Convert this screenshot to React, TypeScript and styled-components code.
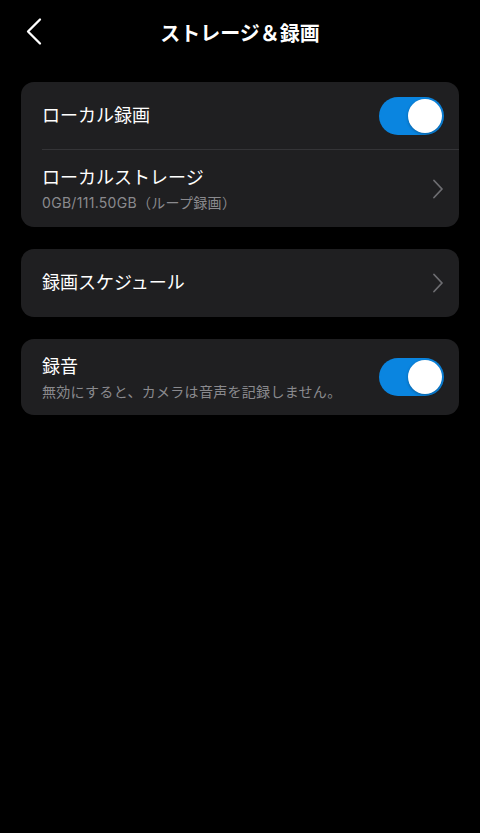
import { FC, useState } from 'react'
import styled, { createGlobalStyle } from 'styled-components'

const GlobalStyle = createGlobalStyle`
  html, body {
    margin: 0;
    padding: 0;
    background: #000;
  }
  body {
    font-family: "Inter", "Noto Sans CJK JP", "Noto Sans", sans-serif;
    color: #fff;
  }
`

const Page = styled.div`
  width: 480px;
  min-height: 833px;
  background: #000;
  display: flex;
  flex-direction: column;
`

const Header = styled.header`
  position: relative;
  height: 64px;
  display: flex;
  align-items: center;
  justify-content: center;
`

const BackButton = styled.button`
  position: absolute;
  left: 25px;
  top: 17px;
  width: 18px;
  height: 29px;
  padding: 0;
  border: none;
  background: none;
  display: flex;
  align-items: center;
  justify-content: center;
`

const Title = styled.h1`
  margin: 0;
  font-size: 20px;
  font-weight: 700;
  color: #fff;
`

const Content = styled.main`
  display: flex;
  flex-direction: column;
  gap: 22px;
  padding: 18px 21px 0;
`

const Card = styled.section`
  background: #1f1f21;
  border-radius: 13px;
  overflow: hidden;
`

const Row = styled.div<{ $height: number; $divider?: boolean }>`
  height: ${(p) => p.$height}px;
  display: flex;
  align-items: center;
  justify-content: space-between;
  padding: 0 15px 0 21px;
  position: relative;
  box-sizing: border-box;
  ${(p) =>
    p.$divider &&
    `&::after {
      content: '';
      position: absolute;
      left: 21px;
      right: 0;
      bottom: 0;
      height: 1px;
      background: #343437;
    }`}
`

const Texts = styled.div`
  display: flex;
  flex-direction: column;
  gap: 3px;
  padding-top: 2px;
`

const Label = styled.span`
  font-size: 18px;
  line-height: 24px;
  color: #fff;
`

const Sub = styled.span`
  font-size: 14px;
  line-height: 20px;
  letter-spacing: 0.3px;
  color: #8a8a8e;
`

const Track = styled.button<{ $on: boolean }>`
  width: 65px;
  height: 38px;
  border-radius: 19px;
  border: none;
  padding: 0;
  background: ${(p) => (p.$on ? '#0a85e0' : '#39393d')};
  position: relative;
  flex-shrink: 0;
  cursor: pointer;
`

const Knob = styled.span<{ $on: boolean }>`
  position: absolute;
  top: 2px;
  left: ${(p) => (p.$on ? '29px' : '2px')};
  width: 34px;
  height: 34px;
  border-radius: 50%;
  background: #fff;
  box-shadow: 0 1px 3px rgba(0, 0, 0, 0.3);
`

const Toggle: FC<{ defaultOn?: boolean }> = ({ defaultOn = true }) => {
  const [on, setOn] = useState(defaultOn)
  return (
    <Track $on={on} onClick={() => setOn(!on)}>
      <Knob $on={on} />
    </Track>
  )
}

const Chevron = () => (
  <svg width="14" height="20" viewBox="0 0 14 20" fill="none">
    <path d="M4 1.5 L12 10 L4 18.5" stroke="#6d6d71" strokeWidth="1.8" strokeLinecap="round" strokeLinejoin="round" />
  </svg>
)

export default function App() {
  return (
    <Page>
      <GlobalStyle />
      <Header>
        <BackButton aria-label="back">
          <svg width="18" height="29" viewBox="0 0 18 29" fill="none">
            <path d="M15 2.5 L3 14.5 L15 26.5" stroke="#fff" strokeWidth="2.3" strokeLinecap="round" strokeLinejoin="round" />
          </svg>
        </BackButton>
        <Title>ストレージ＆録画</Title>
      </Header>
      <Content>
        <Card>
          <Row $height={68} $divider>
            <Label>ローカル録画</Label>
            <Toggle />
          </Row>
          <Row $height={77}>
            <Texts>
              <Label>ローカルストレージ</Label>
              <Sub>0GB/111.50GB（ループ録画）</Sub>
            </Texts>
            <Chevron />
          </Row>
        </Card>
        <Card>
          <Row $height={68}>
            <Label>録画スケジュール</Label>
            <Chevron />
          </Row>
        </Card>
        <Card>
          <Row $height={76}>
            <Texts>
              <Label>録音</Label>
              <Sub>無効にすると、カメラは音声を記録しません。</Sub>
            </Texts>
            <Toggle />
          </Row>
        </Card>
      </Content>
    </Page>
  )
}
